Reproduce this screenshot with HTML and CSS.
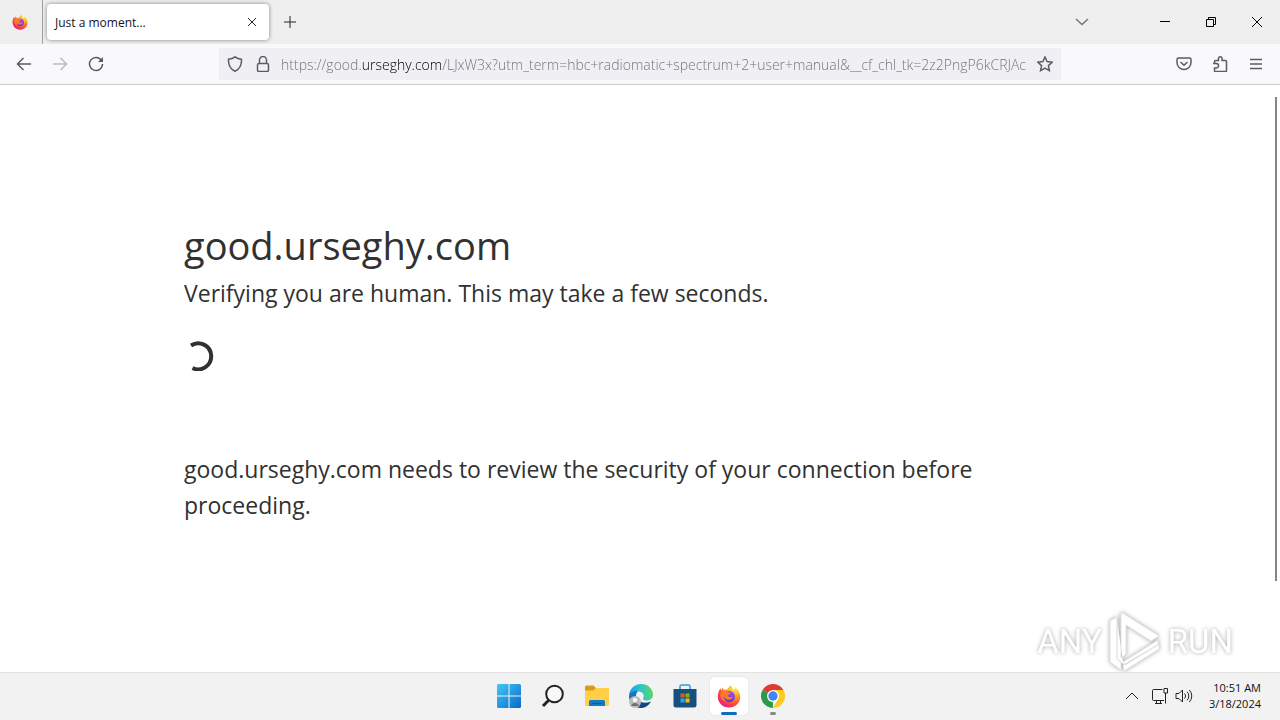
FILE: index.html
```html
<!DOCTYPE html>
<html lang="en">
<head>
    <meta charset="UTF-8">
    <meta name="viewport" content="width=device-width, initial-scale=1.0">
    <title>Just a moment...</title>
    <link rel="stylesheet" href="styles.css">
</head>
<body>
    <!-- Shared icon artwork -->
    <svg class="defs" width="0" height="0" aria-hidden="true">
        <defs>
            <radialGradient id="fox-body" cx="0.75" cy="0.15" r="0.95">
                <stop offset="0" stop-color="#fff14a"/>
                <stop offset="0.35" stop-color="#ffa922"/>
                <stop offset="0.7" stop-color="#ff5032"/>
                <stop offset="1" stop-color="#e31587"/>
            </radialGradient>
            <linearGradient id="fox-globe" x1="0" y1="0" x2="0" y2="1">
                <stop offset="0" stop-color="#b14cf5"/>
                <stop offset="1" stop-color="#5b3ac4"/>
            </linearGradient>
            <symbol id="firefox" viewBox="0 0 24 24">
                <path d="M12 23.5C5.6 23.5.8 18.600.8 12.500c0-3 .9-5.800 2.800-8.200l.6 2.400 1.600-3.200.9 2.400c1.200-.4 2.400-.5 3.400-.3 1-1.700 2.400-2.800 4.300-4.300.2 2.200 1 3.300 2.600 4.700l1.200-2.800c3.100 2.500 5 5.500 5 9.800 0 6.200-4.900 10.500-11.200 10.500z" fill="url(#fox-body)"/>
                <circle cx="12.300" cy="12.500" r="5.700" fill="url(#fox-globe)"/>
                <path d="M3.500 9.500c2-2.300 5-2.700 7.500-1.300 1 .1 2 .1 2.700.5-.4 1.200-2.200 1.600-2.800 2.200-.3 1 .6 2.500 2.600 2.300 1.200-.2 1.800-.5 2.700-.1-.9 2-3.400 3.400-6.200 2.400-1.800-.7-2.700-2-2.900-3.500-.5 1.500.1 4.200 2.500 5.700-4.200-.6-6.700-4-6.100-8.200z" fill="#ff7a26"/>
            </symbol>
        </defs>
    </svg>

    <!-- Tab strip -->
    <header class="tab-strip">
        <button class="view-button" aria-label="Firefox View"><svg width="16" height="16"><use href="#firefox"/></svg></button>
        <div class="tab">
            <span class="tab-title">Just a moment...</span>
            <button class="tab-close" aria-label="Close tab"><svg width="10" height="10" viewBox="0 0 10 10"><path d="M1 1l8 8M9 1l-8 8"/></svg></button>
        </div>
        <button class="new-tab" aria-label="New tab"><svg width="12" height="12" viewBox="0 0 12 12"><path d="M6 0v12M0 6h12"/></svg></button>
        <button class="list-tabs" aria-label="List all tabs"><svg width="14" height="8" viewBox="0 0 14 8"><path d="M1 1l6 5.500L13 1"/></svg></button>
        <div class="window-buttons">
            <button aria-label="Minimize"><svg width="10" height="10" viewBox="0 0 10 10"><path d="M0 4.500h10"/></svg></button>
            <button aria-label="Restore"><svg width="10" height="10" viewBox="0 0 10 10"><path d="M.5 2.500h7v7h-7zM2.500 2.500v-2h7v7h-2"/></svg></button>
            <button aria-label="Close"><svg width="10" height="10" viewBox="0 0 10 10"><path d="M0 0l10 10M10 0L0 10"/></svg></button>
        </div>
    </header>

    <!-- Navigation toolbar -->
    <nav class="toolbar">
        <div class="nav-buttons">
            <button aria-label="Back"><svg width="16" height="16" viewBox="0 0 16 16"><path d="M15 8H1.500M7.500 2l-6 6 6 6"/></svg></button>
            <button aria-label="Forward" disabled><svg width="16" height="16" viewBox="0 0 16 16"><path d="M1 8h13.500M8.500 2l6 6-6 6"/></svg></button>
            <button aria-label="Reload"><svg width="16" height="16" viewBox="0 0 16 16"><path d="M13.500 4.500A6.500 6.500 0 1 0 14.500 8"/><path d="M15 1v5h-5z" fill="#5b5b66" stroke="none"/></svg></button>
        </div>
        <form class="url-bar">
            <button type="button" aria-label="Tracking protection"><svg width="16" height="16" viewBox="0 0 16 16"><path d="M8 .8c2 1.600 4 2.200 6.500 2.400.3 6-2 10-6.500 12-4.500-2-6.800-6-6.500-12C4 3 6 2.400 8 .8z"/></svg></button>
            <button type="button" aria-label="Site information"><svg width="16" height="16" viewBox="0 0 16 16"><rect x="2.500" y="7.500" width="11" height="8" rx="1.500"/><path d="M4.500 7.500V4a3.500 3.500 0 0 1 7 0v3.500"/></svg></button>
            <input class="url" type="text" aria-label="Address" value="https://good.urseghy.com/LJxW3x?utm_term=hbc+radiomatic+spectrum+2+user+manual&amp;__cf_chl_tk=2z2PngP6kCRJAc">
            <button type="button" aria-label="Bookmark this page"><svg width="16" height="16" viewBox="0 0 16 16"><path d="M8 1l2.100 4.600 5 .6-3.700 3.400 1 5L8 12.100l-4.400 2.500 1-5L.9 6.200l5-.6z"/></svg></button>
        </form>
        <div class="toolbar-end">
            <button aria-label="Save to Pocket"><svg width="16" height="16" viewBox="0 0 16 16"><path d="M2.500 2h11A1.500 1.500 0 0 1 15 3.500v3a7 7 0 0 1-14 0v-3A1.500 1.500 0 0 1 2.500 2zM4.500 6L8 9.300 11.500 6"/></svg></button>
            <button aria-label="Extensions"><svg width="16" height="16" viewBox="0 0 16 16"><path d="M2.500 7.500V5.500a1 1 0 0 1 1-1h3V2.600a1.800 1.800 0 0 1 3.600 0v1.900h3.400a1 1 0 0 1 1 1v9a1 1 0 0 1-1 1h-10a1 1 0 0 1-1-1V12h1.800a1.800 1.800 0 0 0 0-4.500H1"/></svg></button>
            <button aria-label="Application menu"><svg width="12" height="16" viewBox="0 0 12 16"><path d="M0 3.500h12M0 8h12M0 12.500h12"/></svg></button>
        </div>
    </nav>

    <!-- Page content -->
    <main class="page">
        <div class="main-content">
            <h1>good.urseghy.com</h1>
            <h2>Verifying you are human. This may take a few seconds.</h2>
            <div class="challenge">
                <svg class="spinner" width="30" height="30" viewBox="0 0 30 30"><path d="M7 4.500A13 13 0 1 1 8.500 27"/></svg>
            </div>
            <p>good.urseghy.com needs to review the security of your connection before proceeding.</p>
        </div>
        <div class="scrollbar"></div>
        <div class="watermark">
            <span>ANY</span>
            <svg width="58" height="62" viewBox="0 0 58 62"><path d="M15 2l38 24-8 5-25-16v29l-5 4zM11 9v40l8 6 33-20v-5L17 52M4 11l7-4v42l4 3v8l-11-8zM17 55l36-21v5L18 61z"/></svg>
            <span>RUN</span>
        </div>
    </main>

    <!-- Taskbar -->
    <footer class="taskbar">
        <div class="apps">
            <button aria-label="Start">
                <svg width="24" height="24" viewBox="0 0 24 24">
                    <defs><linearGradient id="win" x1="0" y1="0" x2="1" y2="1"><stop offset="0" stop-color="#45c8f5"/><stop offset="1" stop-color="#0669c9"/></linearGradient></defs>
                    <path d="M1.500 0H11.500V11.500H0V1.500A1.500 1.500 0 0 1 1.500 0zM12.500 0H22.500A1.500 1.500 0 0 1 24 1.500V11.500H12.500zM0 12.500H11.500V24H1.500A1.500 1.500 0 0 1 0 22.500zM12.500 12.500H24V22.500A1.500 1.500 0 0 1 22.500 24H12.500z" fill="url(#win)"/>
                </svg>
            </button>
            <button aria-label="Search">
                <svg width="24" height="24" viewBox="0 0 24 24" fill="none" stroke="#222"><circle cx="13.500" cy="10" r="8.300" fill="#f8f8f8" stroke-width="2"/><path d="M7.700 16.300L2 22" stroke-width="3"/></svg>
            </button>
            <button aria-label="File Explorer">
                <svg width="24" height="24" viewBox="0 0 24 24">
                    <path d="M0 3a1.500 1.500 0 0 1 1.500-1.500h7L11 4h11.500A1.500 1.500 0 0 1 24 5.500V12H0z" fill="#d99a14"/>
                    <path d="M0 6.500h8.500L11 4h11.500A1.500 1.500 0 0 1 24 5.500v15a1.500 1.500 0 0 1-1.500 1.500h-21A1.500 1.500 0 0 1 0 20.500z" fill="#ffcf48"/>
                    <path d="M4 22v-4.500A1.500 1.500 0 0 1 5.500 16h13a1.500 1.500 0 0 1 1.500 1.500V22z" fill="#1478c8"/>
                    <path d="M7 19h10v1H7z" fill="#0c5a9e"/>
                </svg>
            </button>
            <button aria-label="Microsoft Edge">
                <svg width="24" height="24" viewBox="0 0 24 24">
                    <defs>
                        <linearGradient id="edge-top" x1="0" y1="0.500" x2="1" y2="0.400"><stop offset="0" stop-color="#1d9be0"/><stop offset="0.500" stop-color="#2fc2cf"/><stop offset="1" stop-color="#63d957"/></linearGradient>
                        <linearGradient id="edge-low" x1="0" y1="0" x2="0.700" y2="1"><stop offset="0" stop-color="#1583d5"/><stop offset="1" stop-color="#103f79"/></linearGradient>
                    </defs>
                    <path d="M0 12C0 5 5.500 0 12 0c7 0 12 5 12 10.500 0 4-3 6-6.500 6-3 0-4-1.200-3.300-2.300C15.500 12 15 8.500 10.500 7.500 6 6.600 1.500 9 0 12z" fill="url(#edge-top)"/>
                    <path d="M0 12c1-3.500 5-5.500 9-4.700C7 9 6.500 11.500 7.500 14c1.700 4.300 7.500 6 14.500 3.500C19.500 22 15.500 24 12 24 5 24 0 18.500 0 12z" fill="url(#edge-low)"/>
                    <circle cx="6" cy="18" r="6" fill="#bcbcbc"/>
                    <circle cx="6" cy="16" r="2.300" fill="#f5f5f5"/>
                    <path d="M2.200 22c.3-4 7.300-4 7.600 0z" fill="#776f6b"/>
                </svg>
            </button>
            <button aria-label="Microsoft Store">
                <svg width="24" height="24" viewBox="0 0 24 24">
                    <path d="M7 6V2.500A1.500 1.500 0 0 1 8.500 1h7A1.500 1.500 0 0 1 17 2.500V6" fill="none" stroke="#2ba3dd" stroke-width="1.600"/>
                    <path d="M.5 5h23v16a2.500 2.500 0 0 1-2.500 2.500H3A2.500 2.500 0 0 1 .5 21z" fill="#17507f"/>
                    <path d="M7.500 9.500h4v4h-4z" fill="#f25022"/><path d="M12.500 9.500h4v4h-4z" fill="#7fba00"/>
                    <path d="M7.500 14.500h4v4h-4z" fill="#28a8ea"/><path d="M12.500 14.500h4v4h-4z" fill="#ffb900"/>
                </svg>
            </button>
            <button class="active" aria-label="Firefox"><svg width="24" height="24"><use href="#firefox"/></svg></button>
            <button class="running" aria-label="Google Chrome">
                <svg width="24" height="24" viewBox="0 0 24 24">
                    <path d="M12 12L1.600 6A12 12 0 0 1 22.400 6z" fill="#df3b30"/>
                    <path d="M12 12l-.1 12A12 12 0 0 1 1.600 6z" fill="#2c9a49"/>
                    <path d="M12 6h10.400A12 12 0 0 1 11.900 24l5.300-9z" fill="#fccb22"/>
                    <circle cx="12" cy="12" r="6" fill="#fff"/><circle cx="12" cy="12" r="4.700" fill="#4285f4"/>
                </svg>
            </button>
        </div>
        <div class="tray">
            <button aria-label="Show hidden icons"><svg width="14" height="8" viewBox="0 0 14 8"><path d="M1 7l6-6 6 6"/></svg></button>
            <button aria-label="Network"><svg width="16" height="16" viewBox="0 0 16 16"><path d="M10.500 1.500h-9a1 1 0 0 0-1 1v9a1 1 0 0 0 1 1H12M4.500 12.500v3M8.500 12.500v3M3 15.500h7M12 .5h3.500V5H12zM13.500 5v10.500"/></svg></button>
            <button aria-label="Volume"><svg width="18" height="14" viewBox="0 0 18 14"><path d="M1 4.500h3L7.500 1v12L4 9.500H1zM9.500 4.500a3.500 3.500 0 0 1 0 5M12 2.700a6 6 0 0 1 0 8.600M14.300 1a8.500 8.500 0 0 1 0 12"/></svg></button>
        </div>
        <div class="clock">
            <time>10:51 AM</time>
            <time>3/18/2024</time>
        </div>
    </footer>
</body>
</html>
```
FILE: styles.css
```css
* {
    box-sizing: border-box;
}

body {
    margin: 0;
    height: 100vh;
    display: flex;
    flex-direction: column;
    overflow: hidden;
    background: #fff;
    font-family: "Open Sans", "Noto Sans", sans-serif;
}

.defs {
    position: absolute;
}

button {
    display: flex;
    align-items: center;
    justify-content: center;
    padding: 0;
    border: none;
    background: none;
}

/* Tab strip */
.tab-strip {
    display: flex;
    align-items: center;
    height: 44px;
    flex-shrink: 0;
    background: #efefef;
}

.tab-strip button path {
    fill: none;
    stroke: #222;
}

.view-button {
    width: 43px;
    height: 44px;
    padding-right: 2px;
    border-right: 1px solid #a0a0a0;
}

.tab-strip .view-button path {
    stroke: none;
}

.tab {
    display: flex;
    align-items: center;
    justify-content: space-between;
    width: 222px;
    height: 36px;
    margin-left: 4px;
    padding: 0 7px 0 8px;
    border-radius: 4px;
    background: #fff;
    box-shadow: 0 0 4px rgba(0, 0, 0, 0.45);
}

.tab-title {
    font-size: 12px;
    color: #15141a;
}

.tab-close {
    width: 20px;
    height: 20px;
}

.new-tab {
    width: 42px;
    height: 40px;
}

.list-tabs {
    width: 40px;
    height: 40px;
    margin-left: auto;
    margin-right: 40px;
}

.tab-strip .list-tabs path {
    stroke: #777;
    stroke-width: 1.5;
}

.window-buttons {
    display: flex;
}

.window-buttons button {
    width: 46px;
    height: 44px;
}

.tab-strip .window-buttons path {
    stroke: #000;
}

/* Toolbar */
.toolbar {
    display: flex;
    align-items: center;
    height: 41px;
    flex-shrink: 0;
    padding: 0 6px;
    background: #f9f9fb;
    border-bottom: 1px solid #ccc;
}

.toolbar button {
    width: 36px;
    height: 32px;
}

.toolbar svg {
    fill: none;
    stroke: #5b5b66;
    stroke-width: 1.5;
}

.toolbar button:disabled {
    opacity: 0.4;
}

.nav-buttons,
.toolbar-end {
    display: flex;
    flex: 1;
}

.toolbar-end {
    justify-content: flex-end;
}

.url-bar {
    display: flex;
    align-items: center;
    flex: 0 1 842px;
    height: 32px;
    padding: 0 2px;
    background: #f0f0f4;
}

.url-bar button {
    width: 28px;
    flex-shrink: 0;
}

.url {
    flex: 1;
    min-width: 0;
    height: 32px;
    padding: 0;
    margin-left: 4px;
    border: none;
    outline: none;
    /* The host name is darker than the rest of the address */
    background: linear-gradient(to right, #6e6e78 80px, #000 80px, #000 161px, #6e6e78 161px);
    -webkit-background-clip: text;
    background-clip: text;
    color: transparent;
    font-family: inherit;
    font-size: 14px;
    font-weight: 300;
}

/* Page content */
.page {
    position: relative;
    flex: 1;
    min-height: 0;
    overflow: hidden;
    color: #313131;
}

.main-content {
    max-width: 960px;
    margin: 130px auto 0;
    padding: 0 24px;
}

h1 {
    margin: 0;
    font-size: 38px;
    font-weight: 400;
    line-height: 60px;
}

h2 {
    margin: 0;
    font-size: 23px;
    font-weight: 400;
    line-height: 36px;
}

.challenge {
    height: 140px;
    padding-top: 30px;
}

.spinner {
    fill: none;
    stroke: #313131;
    stroke-width: 4;
}

p {
    margin: 0;
    font-size: 23px;
    line-height: 36px;
}

.scrollbar {
    position: absolute;
    top: 12px;
    right: 3px;
    width: 2px;
    height: 484px;
    background: #858585;
}

.watermark {
    position: absolute;
    right: 47px;
    bottom: 0;
    display: flex;
    align-items: center;
    gap: 4px;
    color: #fff;
    font-family: Roboto, "Liberation Sans", sans-serif;
    font-size: 33px;
    filter: drop-shadow(0 0 2px rgba(0, 0, 0, 0.35));
}

.watermark svg {
    fill: #fff;
    stroke: #e4e4e4;
    stroke-width: 1;
}

/* Taskbar */
.taskbar {
    display: flex;
    align-items: center;
    justify-content: flex-end;
    height: 48px;
    flex-shrink: 0;
    padding: 0 19px 2px 0;
    border-top: 1px solid #e2e2e2;
    background: #f2f2f2;
}

.apps {
    display: flex;
    flex: 1;
    justify-content: center;
    gap: 6px;
    padding-left: 166px;
}

.apps button {
    position: relative;
    width: 38px;
    height: 38px;
    border-radius: 4px;
}

.apps .active {
    background: #fff;
    box-shadow: 0 0 1px rgba(0, 0, 0, 0.3);
}

.apps .active::after,
.apps .running::after {
    content: "";
    position: absolute;
    bottom: 0;
    width: 16px;
    height: 3px;
    border-radius: 2px;
    background: #0f6cbd;
}

.apps .running::after {
    width: 6px;
    background: #888;
}

.tray {
    display: flex;
    align-items: center;
}

.tray button {
    width: 24px;
    height: 32px;
}

.tray button:first-child {
    width: 32px;
}

.tray path {
    fill: none;
    stroke: #222;
}

.clock {
    display: flex;
    flex-direction: column;
    width: 65px;
    text-align: right;
    font-size: 11px;
    line-height: 16px;
    color: #111;
}
```
